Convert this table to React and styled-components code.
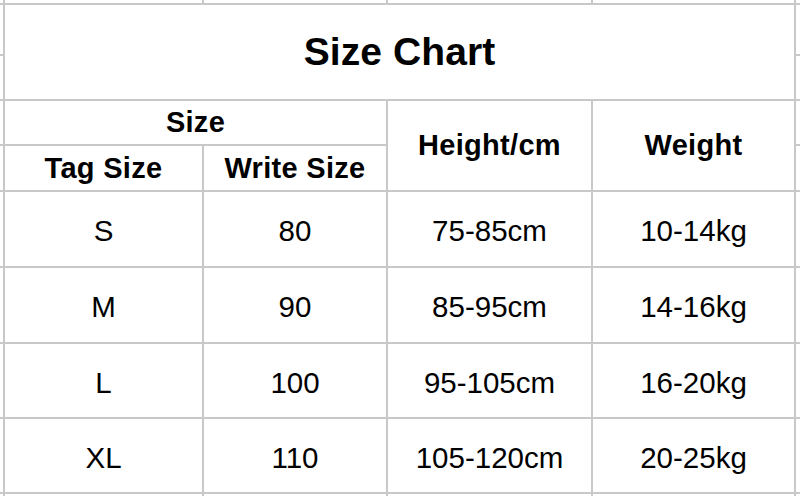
import styled, { createGlobalStyle } from 'styled-components';

const GlobalStyle = createGlobalStyle`
  html, body {
    margin: 0;
    padding: 0;
    background: #ffffff;
  }
  body {
    font-family: "Liberation Sans", Arial, sans-serif;
    color: #000;
  }
`

// spreadsheet grid: 1px margin cols/rows round the chart, 2px grid lines via gap
const Sheet = styled.div`
  display: grid;
  width: 800px;
  height: 496px;
  overflow: hidden;
  background: #c8c8c8;
  gap: 2px;
  grid-template-columns: 3px 197px 182px 203px 201px 1fr;
  grid-template-rows: 3px 49px 43px 43px 44px 74px 74px 73px 73px 1fr;
`
const Cell = styled.div`
  background: #fff;
  display: flex;
  align-items: center;
  justify-content: center;
  grid-column: ${({ $col, $colSpan = 1 }) => `${$col} / span ${$colSpan}`};
  grid-row: ${({ $row, $rowSpan = 1 }) => `${$row} / span ${$rowSpan}`};
  white-space: nowrap;
`
const Title = styled(Cell)`
  font-size: 39px;
  font-weight: 700;
  letter-spacing: 0.1px;
`
const Head = styled(Cell)`
  font-size: 29px;
  font-weight: 700;
  letter-spacing: 0.3px;
`
const Data = styled(Cell)`
  font-size: 29.5px;
  padding-top: 4px;
  box-sizing: border-box;
`

const rows = [
  ['S', '80', '75-85cm', '10-14kg'],
  ['M', '90', '85-95cm', '14-16kg'],
  ['L', '100', '95-105cm', '16-20kg'],
  ['XL', '110', '105-120cm', '20-25kg'],
];

function marginCells() {
  const cells = [];
  for (let c = 1; c <= 6; c++) {
    cells.push([c, 1]);
    cells.push([c, 10]);
  }
  for (let r = 2; r <= 9; r++) {
    cells.push([1, r]);
    cells.push([6, r]);
  }
  return cells;
}

export default function App() {
  return (
    <>
      <GlobalStyle />
      <Sheet>
        {marginCells().map(([c, r]) => (
          <Cell key={`m-${c}-${r}`} $col={c} $row={r} />
        ))}

        <Title $col={2} $colSpan={4} $row={2} $rowSpan={2}>Size Chart</Title>

        <Head $col={2} $colSpan={2} $row={4}>Size</Head>
        <Head $col={4} $row={4} $rowSpan={2}>Height/cm</Head>
        <Head $col={5} $row={4} $rowSpan={2}>Weight</Head>
        <Head $col={2} $row={5}>Tag Size</Head>
        <Head $col={3} $row={5}>Write Size</Head>

        {rows.map((row, i) =>
          row.map((val, j) => (
            <Data key={`${i}-${j}`} $col={j + 2} $row={i + 6}>{val}</Data>
          ))
        )}
      </Sheet>
    </>
  );
}
